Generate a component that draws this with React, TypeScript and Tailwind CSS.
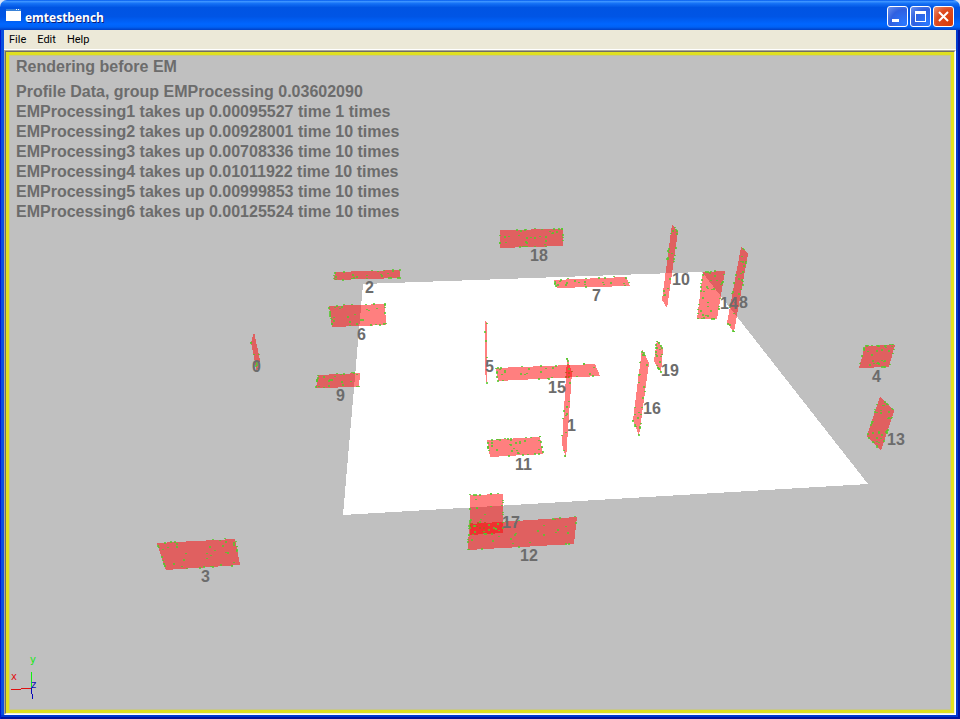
import React from 'react';

type Point = [number, number];

interface Panel {
  id: number;
  corners: [Point, Point, Point, Point];
  label: Point;
  marks: number;
}

const profileLines = [
  'Profile Data, group EMProcessing 0.03602090',
  'EMProcessing1 takes up 0.00095527 time 1 times',
  'EMProcessing2 takes up 0.00928001 time 10 times',
  'EMProcessing3 takes up 0.00708336 time 10 times',
  'EMProcessing4 takes up 0.01011922 time 10 times',
  'EMProcessing5 takes up 0.00999853 time 10 times',
  'EMProcessing6 takes up 0.00125524 time 10 times',
];

const panels: Panel[] = [
  { id: 0, corners: [[254, 332], [260, 360], [257, 372], [251, 343]], label: [252, 372], marks: 8 },
  { id: 1, corners: [[567, 358], [572, 372], [566, 459], [562, 444]], label: [567, 431], marks: 20 },
  { id: 2, corners: [[335, 272], [400, 270], [400, 278], [334, 280]], label: [365, 293], marks: 26 },
  { id: 3, corners: [[157, 543], [235, 539], [240, 565], [166, 570]], label: [201, 582], marks: 46 },
  { id: 4, corners: [[865, 346], [895, 345], [889, 367], [859, 368]], label: [872, 382], marks: 40 },
  { id: 5, corners: [[485, 321], [487, 322], [487, 385], [485, 372]], label: [485, 372], marks: 5 },
  { id: 6, corners: [[329, 306], [385, 304], [386, 325], [332, 327]], label: [357, 340], marks: 38 },
  { id: 7, corners: [[554, 280], [626, 277], [630, 286], [557, 288]], label: [592, 301], marks: 26 },
  { id: 8, corners: [[741, 247], [748, 254], [734, 332], [727, 323]], label: [739, 308], marks: 28 },
  { id: 9, corners: [[318, 375], [360, 373], [359, 387], [316, 388]], label: [336, 401], marks: 28 },
  { id: 10, corners: [[672, 224], [678, 232], [667, 308], [662, 300]], label: [672, 285], marks: 22 },
  { id: 11, corners: [[487, 440], [540, 437], [543, 454], [490, 457]], label: [515, 470], marks: 44 },
  { id: 12, corners: [[469, 524], [577, 517], [574, 544], [468, 550]], label: [520, 561], marks: 44 },
  { id: 13, corners: [[880, 396], [894, 411], [881, 451], [867, 436]], label: [887, 445], marks: 42 },
  { id: 14, corners: [[703, 272], [725, 271], [717, 319], [697, 319]], label: [720, 309], marks: 44 },
  { id: 15, corners: [[496, 368], [595, 364], [600, 376], [498, 381]], label: [548, 393], marks: 36 },
  { id: 16, corners: [[642, 349], [649, 363], [639, 436], [633, 420]], label: [643, 414], marks: 28 },
  { id: 17, corners: [[470, 495], [503, 494], [503, 533], [470, 535]], label: [502, 528], marks: 42 },
  { id: 18, corners: [[500, 230], [563, 229], [563, 246], [500, 248]], label: [530, 261], marks: 40 },
  { id: 19, corners: [[657, 340], [663, 349], [661, 373], [654, 361]], label: [661, 376], marks: 22 },
];

// Sample marks over a panel, half of them on its outline
function sampleMarks({ id, corners, marks }: Panel): Point[] {
  let seed = id * 7919 + 13;
  const rand = () => {
    seed = (seed * 16807) % 2147483647;
    return seed / 2147483647;
  };
  rand();
  rand();
  const [a, b, c, d] = corners;
  return Array.from({ length: marks }, (_, i) => {
    let u = rand();
    let v = rand();
    if (i % 2 === 0) {
      const edge = Math.floor(rand() * 4);
      if (edge === 0) v = 0;
      if (edge === 1) u = 1;
      if (edge === 2) v = 1;
      if (edge === 3) u = 0;
    }
    const at = (k: 0 | 1) =>
      (1 - v) * ((1 - u) * a[k] + u * b[k]) + v * ((1 - u) * d[k] + u * c[k]);
    return [Math.round(at(0)) - 1, Math.round(at(1)) - 1] as Point;
  });
}

function Scene() {
  return (
    <svg viewBox="9 55 942 655" className="absolute inset-0 h-full w-full" role="img" aria-label="Scene">
      <polygon points="363,284 702,272 868,484 343,515" fill="#ffffff" shapeRendering="crispEdges" />
      <g shapeRendering="crispEdges">
        {panels.map((p) => (
          <g key={p.id}>
            <polygon points={p.corners.map((c) => c.join(',')).join(' ')} fill="#ff0000" fillOpacity={0.5} />
            {sampleMarks(p).map(([x, y], i) => (
              <rect
                key={i}
                x={x}
                y={y}
                width={2}
                height={i % 4 < 2 ? 2 : 1}
                fill="#54c82c"
                fillOpacity={0.8}
              />
            ))}
          </g>
        ))}
      </g>
      <g fill="#6c6c6c" className="font-['Liberation_Sans',Arial,sans-serif] text-[16px] font-bold">
        {panels.map((p) => (
          <text key={p.id} x={p.label[0]} y={p.label[1]}>{p.id}</text>
        ))}
      </g>
      <g shapeRendering="crispEdges">
        <rect x="31" y="672" width="1" height="16" fill="#10f010" />
        <rect x="11" y="689" width="10" height="1" fill="#e01010" />
        <rect x="21" y="688" width="10" height="1" fill="#e01010" />
        <rect x="31" y="688" width="1" height="6" fill="#0808b8" />
        <rect x="32" y="694" width="1" height="5" fill="#0808b8" />
      </g>
      <g className="font-['DejaVu_Sans',sans-serif] text-[10px]">
        <text x="11" y="680" fill="#e01010">x</text>
        <text x="30" y="663" fill="#10e810">y</text>
        <text x="31" y="688" fill="#0808b8">z</text>
      </g>
    </svg>
  );
}

const captionButton = 'flex size-[21px] items-center justify-center rounded-[3px] border border-white';
const blueButton = 'bg-[radial-gradient(circle_at_85%_85%,#2a78ff,#2f60e0_60%,#6d92ee)]';

function TitleBar() {
  return (
    <header className="flex h-[30px] shrink-0 items-center rounded-t-[7px] bg-[linear-gradient(#0058ee_0%,#3c93ff_5%,#1470f5_12%,#0054e3_25%,#0055e5_55%,#0066ff_80%,#0062f5_90%,#003fc4_100%)] px-[6px] pt-[3px]">
      <svg width="15" height="12" viewBox="0 0 15 12" shapeRendering="crispEdges" className="mb-[3px]" aria-hidden="true">
        <rect width="15" height="12" fill="#ffffff" />
        <rect width="15" height="2" fill="#3a82d8" />
        <rect x="10" width="1" height="1" fill="#ffffff" />
        <rect x="12" width="1" height="1" fill="#ffffff" />
      </svg>
      <h1 className="ml-1 flex-1 pt-[2px] font-['Open_Sans','Noto_Sans',sans-serif] text-[12px] font-bold text-white [text-shadow:1px_1px_#0a1f7a]">
        emtestbench
      </h1>
      <div className="flex gap-[2px]">
        <button aria-label="Minimize" className={`${captionButton} ${blueButton}`}>
          <svg width="13" height="13" shapeRendering="crispEdges"><rect x="1" y="9" width="7" height="3" fill="#ffffff" /></svg>
        </button>
        <button aria-label="Maximize" className={`${captionButton} ${blueButton}`}>
          <svg width="13" height="13" shapeRendering="crispEdges" fill="none" stroke="#ffffff">
            <path d="M1.5 2v9.5h10V2" />
            <path d="M1 2.5h11" strokeWidth="3" />
          </svg>
        </button>
        <button aria-label="Close" className={`${captionButton} bg-[radial-gradient(circle_at_85%_85%,#d83c08,#dd4a20_60%,#ee9578)]`}>
          <svg width="13" height="13" stroke="#ffffff" strokeWidth="2"><path d="M2 2l9 9M11 2l-9 9" /></svg>
        </button>
      </div>
    </header>
  );
}

export default function App() {
  return (
    <div className="flex h-screen flex-col bg-[#d8e4f8]">
      <TitleBar />
      <div className="flex min-h-0 flex-1 flex-col bg-[#0a50e0] px-1 pb-1 shadow-[inset_1px_0_#0019cf,inset_-2px_-2px_#0014a0,inset_-4px_-4px_#0038d0]">
        <nav className="flex h-[19px] shrink-0 items-center gap-[11px] bg-[#ece9d8] px-[5px] pt-[2px] font-[Roboto,'Open_Sans',sans-serif] text-[11px] text-black">
          <button>File</button>
          <button>Edit</button>
          <button>Help</button>
        </nav>
        <main className="flex min-h-0 flex-1 flex-col border-t border-white">
          <div className="flex min-h-0 flex-1 flex-col border border-t-[#aca899] border-r-white border-b-white border-l-[#aca899]">
            <div className="flex min-h-0 flex-1 flex-col border border-t-[#716f64] border-r-[#f1efe2] border-b-[#f1efe2] border-l-[#716f64]">
              <div className="relative min-h-0 flex-1 overflow-hidden border-3 border-[#e0e020] bg-[#c0c0c0] shadow-[inset_0_0_0_1px_#c6c690]">
                <Scene />
                <div className="relative px-[7px] pt-[2px] font-['Liberation_Sans',Arial,sans-serif] text-[16px] leading-[20px] font-bold text-[#6c6c6c]">
                  <p className="mb-[5px]">Rendering before EM</p>
                  {profileLines.map((line) => (
                    <p key={line}>{line}</p>
                  ))}
                </div>
              </div>
            </div>
          </div>
        </main>
      </div>
    </div>
  );
}
